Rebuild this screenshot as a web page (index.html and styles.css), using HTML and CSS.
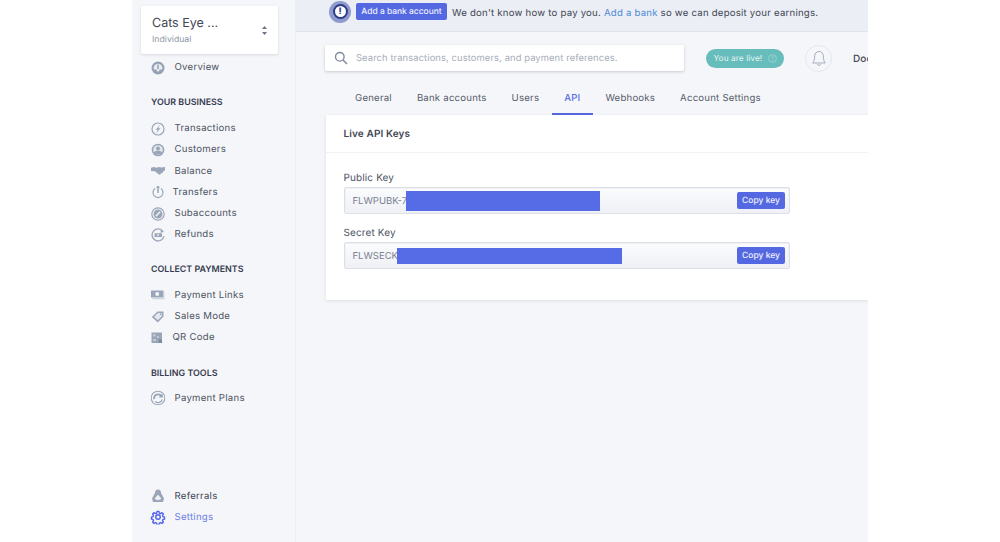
FILE: index.html
```html
<!DOCTYPE html>
<html lang="en">
<head>
<meta charset="utf-8">
<title>API Settings</title>
<link rel="stylesheet" href="styles.css">
</head>
<body>
<div class="app">
  <aside class="sidebar">
    <div class="account">
      <div class="account-text">
        <div class="account-name">Cats Eye ...</div>
        <div class="account-type">Individual</div>
      </div>
      <svg class="updown" width="5" height="9" viewBox="0 0 5 9"><path d="M2.5 0 5 3H0zM2.5 9 0 6h5z" fill="#6b7384"/></svg>
    </div>
    <nav class="nav first">
      <a class="item"><svg class="ico" viewBox="0 0 14 14"><circle cx="7" cy="7" r="6.5" fill="#94a1b6"/><path d="M2.800 8.500a4.400 4.400 0 1 1 8.400 0z" fill="#e9edf2"/><path d="M7 3.500v8" fill="none" stroke="#94a1b6" stroke-width="1.500"/><path d="M5 8.200h4L7 11z" fill="#f2f4f7"/></svg><span>Overview</span></a>
    </nav>
    <h3 class="heading h-business">YOUR BUSINESS</h3>
    <nav class="nav">
      <a class="item"><svg class="ico" viewBox="0 0 14 14"><circle cx="7" cy="7" r="6" fill="none" stroke="#9aa5b8" stroke-width="1.200"/><path d="M9.300 2.600 4.700 7.800h2.100L5 11.400 9.500 6.200H7.300z" fill="#9aa5b8"/></svg><span>Transactions</span></a>
      <a class="item"><svg class="ico" viewBox="0 0 14 14"><circle cx="7" cy="7" r="6.300" fill="#9aa5b8"/><circle cx="7" cy="7" r="4.800" fill="#e4e8ee"/><circle cx="7" cy="5.400" r="2" fill="#9aa5b8"/><path d="M2.800 9.800c1-2.600 7.400-2.600 8.400 0l-1.500 1.700H4.300z" fill="#9aa5b8"/></svg><span>Customers</span></a>
      <a class="item"><svg class="ico" viewBox="0 0 14 14"><path d="M0 3.800 3 3l2.400.8L7.600 3l2.600.5L14 3v3.500l-1.700.8-.6 1.500-1.800.7-.8 1.200-1.600-.4-1.400-1.300-2.200-1.700L0 7z" fill="#9aa5b8"/></svg><span>Balance</span></a>
      <a class="item narrow"><svg class="ico" viewBox="0 0 14 14"><path d="M4 3.600a5 5 0 1 0 6 0" fill="none" stroke="#9aa5b8" stroke-width="1.200"/><path d="M7 1v7" stroke="#9aa5b8" stroke-width="1.500"/><path d="M5 3l2-2.500L9 3z" fill="#9aa5b8"/></svg><span>Transfers</span></a>
      <a class="item"><svg class="ico" viewBox="0 0 14 14"><circle cx="7" cy="7" r="6.200" fill="none" stroke="#9aa5b8" stroke-width="1.200"/><circle cx="7" cy="7" r="4.500" fill="#9aa5b8"/><path d="M4.800 9.200 9.200 4.800" stroke="#f4f6f9" stroke-width="1.400"/></svg><span>Subaccounts</span></a>
      <a class="item"><svg class="ico" viewBox="0 0 14 14"><path d="M12 3.500A6 6 0 1 0 13 8" fill="none" stroke="#9aa5b8" stroke-width="1.300"/><rect x="3.500" y="5.200" width="7.500" height="3.800" rx=".6" fill="#9aa5b8"/><circle cx="7" cy="7.100" r="1" fill="#e9edf2"/><path d="M10 1.500 13 4 9.500 4.800z" fill="#9aa5b8"/></svg><span>Refunds</span></a>
    </nav>
    <h3 class="heading h-collect">COLLECT PAYMENTS</h3>
    <nav class="nav">
      <a class="item"><svg class="ico" viewBox="0 0 14 14"><rect x="0" y="2.500" width="12.500" height="7" fill="#9aa5b8"/><rect x="1.500" y="9.500" width="12" height="1.800" fill="#cfd5de"/><rect x="12.500" y="4" width="1" height="5.500" fill="#cfd5de"/><circle cx="6.200" cy="6" r="2" fill="#f2f4f7"/></svg><span>Payment Links</span></a>
      <a class="item"><svg class="ico" viewBox="0 0 14 14"><path d="M6.500 1.500H12.500v5L6.800 12.500 .8 7z" fill="#9aa5b8"/><path d="M7 3h4v3L6.900 10.300 3 6.800z" fill="#e4e8ee"/><circle cx="9.800" cy="4.200" r=".9" fill="#9aa5b8"/></svg><span>Sales Mode</span></a>
      <a class="item narrow"><svg class="ico" viewBox="0 0 14 14"><rect x="0.500" y="1.500" width="10.500" height="10.500" fill="#9aa5b8"/><rect x="2" y="3" width="2.500" height="2.500" fill="#c2c9d4"/><rect x="6" y="5" width="2" height="2" fill="#c2c9d4"/><rect x="2" y="8" width="3" height="2" fill="#c2c9d4"/><rect x="7.500" y="8.500" width="3.500" height="3.500" fill="#7d899c"/></svg><span>QR Code</span></a>
    </nav>
    <h3 class="heading h-billing">BILLING TOOLS</h3>
    <nav class="nav">
      <a class="item"><svg class="ico big" viewBox="0 0 14 14"><circle cx="7" cy="7" r="6.300" fill="none" stroke="#9aa5b8" stroke-width="1"/><path d="M3.400 8A3.800 3.800 0 0 1 10.400 5.500" fill="none" stroke="#9aa5b8" stroke-width="1.600"/><path d="M7.500 6.500h4.200L11 2.800z" fill="#9aa5b8"/><path d="M4.500 10.300A3.800 3.800 0 0 0 10.800 8.200" fill="none" stroke="#9aa5b8" stroke-width="1.200"/></svg><span>Payment Plans</span></a>
    </nav>
    <nav class="nav bottom">
      <a class="item dark"><svg class="ico" viewBox="0 0 14 14"><circle cx="7" cy="3.200" r="2.800" fill="#9aa5b8"/><path d="M4.500 3 1 9.500 2 13h10l1-3.500L9.500 3z" fill="#9aa5b8"/><path d="M7 5.500 10.500 10 7 11.200 3.500 10z" fill="#eef1f5"/></svg><span>Referrals</span></a>
      <a class="item active"><svg class="ico big" viewBox="0 0 24 24"><path d="M10.300 2h3.400l.6 3 2.200 1 2.600-1.600 2.400 2.400-1.600 2.600 1 2.200 3 .6v3.400l-3 .6-1 2.200 1.600 2.600-2.400 2.400-2.600-1.600-2.200 1-.6 3h-3.400l-.6-3-2.200-1-2.600 1.600-2.400-2.400 1.600-2.600-1-2.200-3-.6v-3.400l3-.6 1-2.200-1.600-2.600 2.400-2.400 2.600 1.600 2.200-1z" transform="translate(1.200 1.200) scale(.9)" fill="none" stroke="#4f61e8" stroke-width="2.400" stroke-linejoin="round"/><circle cx="12" cy="12" r="3.600" fill="none" stroke="#4f61e8" stroke-width="2.200"/></svg><span>Settings</span></a>
    </nav>
  </aside>
  <main class="main">
    <div class="banner">
      <span class="alert"><span class="alert-inner">!</span></span>
      <button class="bank-btn">Add a bank account</button>
      <p class="banner-text">We don't know how to pay you. <a class="link">Add a bank</a> so we can deposit your earnings.</p>
    </div>
    <div class="topbar">
      <div class="search">
        <svg width="14" height="14" viewBox="0 0 14 14"><circle cx="5.800" cy="5.800" r="4.300" fill="none" stroke="#7f8b9e" stroke-width="1.400"/><path d="M9 9l4 4" stroke="#7f8b9e" stroke-width="1.600"/></svg>
        <span class="placeholder">Search transactions, customers, and payment references.</span>
      </div>
      <div class="live"><span class="live-text">You are live!</span><svg width="9" height="9" viewBox="0 0 10 10"><circle cx="5" cy="5" r="4.300" fill="none" stroke="#a9dcd8" stroke-width=".8"/><path d="M3.700 3.900a1.300 1.300 0 1 1 2 1.100c-.5.300-.7.500-.7 1M5 7v.8" fill="none" stroke="#a9dcd8" stroke-width=".8"/></svg></div>
      <div class="bell"><svg width="14" height="17" viewBox="0 0 14 17"><path d="M7 1.500a4.300 4.300 0 0 1 4.300 4.300c0 4 .8 5.500 2 7.200H.7c1.200-1.700 2-3.200 2-7.200A4.300 4.300 0 0 1 7 1.500z" fill="none" stroke="#a3adbd" stroke-width="1"/><path d="M5.300 14.200a1.800 1.800 0 0 0 3.400 0" fill="none" stroke="#a3adbd" stroke-width="1"/></svg></div>
      <div class="docs">Doc</div>
    </div>
    <div class="tabs">
      <a class="tab">General</a>
      <a class="tab">Bank accounts</a>
      <a class="tab">Users</a>
      <a class="tab current">API</a>
      <a class="tab">Webhooks</a>
      <a class="tab">Account Settings</a>
    </div>
    <section class="card">
      <h2 class="card-title">Live API Keys</h2>
      <div class="card-body">
        <div class="field">
          <label class="field-label">Public Key</label>
          <div class="key-box">
            <span class="key-value">FLWPUBK-7</span>
            <span class="redact r-public"></span>
            <button class="copy">Copy key</button>
          </div>
        </div>
        <div class="field">
          <label class="field-label">Secret Key</label>
          <div class="key-box">
            <span class="key-value">FLWSECK</span>
            <span class="redact r-secret"></span>
            <button class="copy">Copy key</button>
          </div>
        </div>
      </div>
    </section>
  </main>
</div>
</body>
</html>
```
FILE: styles.css
```css
* { box-sizing: border-box; }
html, body { margin: 0; height: 100%; background: #fff; overflow: hidden; }
body { font-family: Inter, "Liberation Sans", sans-serif; color: #3f4654; text-rendering: geometricPrecision; }
.app { width: 736px; height: 542px; margin-left: 132px; display: flex; background: #f5f6f9; overflow: hidden; }

.sidebar { width: 164px; flex: none; display: flex; flex-direction: column; padding: 6px 17px 14px 9px; border-right: 1px solid #eceef2; }
.account { height: 48px; background: #fff; border-radius: 2px; box-shadow: 0 1px 3px rgba(60,70,90,.16); display: flex; align-items: center; justify-content: space-between; padding: 0 11px 0 11px; width: 136.5px; }
.account-name { font-size: 12.500px; line-height: 18px; color: #3f4654; }
.account-type { font-size: 8.700px; line-height: 12px; color: #8f98a8; margin-top: 1px; }

.nav { display: flex; flex-direction: column; }
.nav.first { margin-top: 3px; }
.nav.bottom { margin-top: auto; }
.item { height: 21.2px; display: flex; align-items: center; gap: 9.500px; padding-left: 10px; font-size: 9.600px; letter-spacing: .26px; color: #4d5464; white-space: nowrap; }
.item.narrow { gap: 7.500px; }
.item.active { color: #6f7fe9; }
.item.dark { color: #404754; }
.ico { width: 14px; height: 14px; flex: none; }
.ico.big { transform: scale(1.080); }

.heading { margin: 0 0 0 10px; font-size: 8.900px; line-height: 12px; font-weight: 600; color: #363c50; }
.h-business { margin-top: 18.500px; margin-bottom: 9.500px; }
.h-collect { margin-top: 19px; margin-bottom: 8.500px; }
.h-billing { margin-top: 19.500px; margin-bottom: 8px; }

.main { flex: 1; min-width: 0; display: flex; flex-direction: column; overflow: hidden; }
.banner { height: 32px; flex: none; background: #ebeef4; border-bottom: 1px solid #dfe2e8; display: flex; align-items: center; padding-left: 33px; white-space: nowrap; }
.alert { width: 22px; height: 22px; border-radius: 50%; background: #8f9bcf; display: flex; align-items: center; justify-content: center; flex: none; margin-top: -8px; }
.alert-inner { width: 15px; height: 15px; border-radius: 50%; background: #fff; border: 2px solid #2d3a8c; color: #2d3a8c; font-size: 9px; font-weight: 800; line-height: 11px; text-align: center; }
.bank-btn { height: 17px; width: 91px; margin: -8px 0 0 5px; padding: 0; border: 0; border-radius: 2px; background: #5468e2; color: #eef0ff; font: 500 8.450px Inter, sans-serif; text-rendering: geometricPrecision; }
.banner-text { margin: -5px 0 0 5px; font-size: 9.600px; letter-spacing: .23px; color: #3f4654; }
.link { color: #4c8bd8; }

.topbar { height: 52px; flex: none; display: flex; align-items: center; padding: 0 0 0 29px; white-space: nowrap; }
.search { width: 359px; height: 26px; background: #fff; border-radius: 2px; box-shadow: 0 1px 3px rgba(60,70,90,.25); display: flex; align-items: center; padding-left: 9px; gap: 8px; flex: none; }
.placeholder { font-size: 9.400px; letter-spacing: .1px; color: #a7adb8; margin-top: 1px; }
.live { margin-left: 22px; height: 19px; width: 78px; flex: none; border-radius: 10px; background: #67bdbb; color: #e8f6f5; font-size: 8.300px; letter-spacing: .08px; display: flex; align-items: center; padding-left: 7.500px; gap: 6px; }
.live-text { margin-top: 1.500px; }
.bell { margin-left: 21px; width: 27px; height: 27px; flex: none; border-radius: 50%; border: 1px solid #e4e7ec; display: flex; align-items: center; justify-content: center; }
.docs { margin: 1px 0 0 21px; font-size: 10px; font-weight: 500; letter-spacing: .1px; color: #3f4654; width: 15px; overflow: hidden; }

.tabs { height: 31px; flex: none; display: flex; padding-left: 46.500px; }
.tab { padding: 0 12.500px; font-size: 9.600px; line-height: 29.500px; letter-spacing: .22px; color: #555c6b; border-bottom: 2px solid transparent; height: 31px; white-space: nowrap; }
.tab.current { color: #5a6de6; border-bottom-color: #5569e3; font-weight: 500; }

.card { margin-left: 30px; width: 542px; height: 185px; flex: none; background: #fff; box-shadow: 0 1px 3px rgba(60,70,90,.14); }
.card-title { margin: 0; height: 38px; border-bottom: 1px solid #f1f2f5; padding: 13px 0 0 17.500px; font-size: 10px; line-height: 12px; font-weight: 600; letter-spacing: .12px; color: #3f4654; }
.card-body { padding: 19px 0 0 17.500px; display: flex; flex-direction: column; gap: 13px; }
.field-label { display: block; font-size: 10px; letter-spacing: .12px; line-height: 12px; color: #4d5464; margin-bottom: 3px; }
.key-box { width: 446.500px; height: 27px; display: flex; align-items: center; padding-left: 8px; border: 1px solid #dcdfe6; border-radius: 2px; background: linear-gradient(#fbfcfd, #eef0f5); box-shadow: inset 0 0 0 1px #eff1f5; }
.key-value { font-size: 9.500px; color: #7b8392; white-space: nowrap; margin-top: 1px; }
.redact { background: #566ce6; flex: none; margin: 1px 0 0 -1px; }
.r-public { width: 194px; height: 20px; }
.r-secret { width: 225px; height: 16px; }
.copy { margin-left: auto; margin-right: 4px; width: 48px; height: 17px; padding: 0; border: 0; border-radius: 2px; background: #5468e2; color: #eef0ff; font: 500 8.500px Inter, sans-serif; text-rendering: geometricPrecision; }
```
